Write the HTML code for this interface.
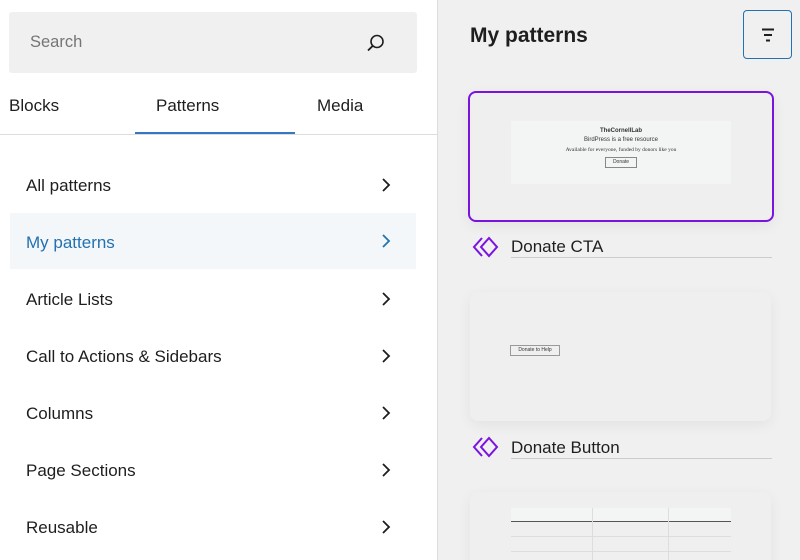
<!DOCTYPE html>
<html><head><style>
*{margin:0;padding:0;box-sizing:border-box}
html,body{width:800px;height:560px;overflow:hidden}
body{background:#f0f0f0;font-family:"Liberation Sans",sans-serif;position:relative;color:#1e1e1e}
.left{position:absolute;left:0;top:0;width:438px;height:560px;background:#fff;border-right:1px solid #ddd}
.search{position:absolute;left:9px;top:12px;width:408px;height:61px;background:#f0f0f0;border-radius:3px}
.search span{position:absolute;left:21px;top:21px;font-size:16.5px;color:#757575}
.tab{position:absolute;top:96px;font-size:17px}
.sep{position:absolute;left:0;top:134px;width:437px;height:1px;background:#ddd}
.ul{position:absolute;left:135px;top:132px;width:160px;height:2px;background:#3477c4}
.item{position:absolute;left:10px;width:406px;height:56px;font-size:17px}
.item span{position:absolute;left:16px;top:19px}
.item svg{position:absolute;left:369px;top:20px}
.sel{background:#f4f7f9;color:#2271b1}
.h{position:absolute;left:470px;top:24px;font-size:21px;font-weight:bold}
.fb{position:absolute;left:743px;top:10px;width:49px;height:49px;border:1.5px solid #2271b1;border-radius:4px;background:#f0f0f0}
.card{position:absolute;left:470px;width:301px;background:#efefef;border-radius:8px;box-shadow:0 4px 14px rgba(0,0,0,.06)}
.lab{position:absolute;left:511px;font-size:17px}
.line{position:absolute;left:511px;width:261px;height:1px;background:#ccc}
</style></head><body>
<div class="left">
<div class="search"><span>Search</span>
<svg style="position:absolute;left:356px;top:20px" width="22" height="22" viewBox="0 0 22 22"><circle cx="12" cy="9.5" r="6" fill="none" stroke="#1e1e1e" stroke-width="1.6"/><path d="M7.8 13.8 3 18.5" stroke="#1e1e1e" stroke-width="1.8"/></svg></div>
<div class="tab" style="left:9px">Blocks</div>
<div class="tab" style="left:156px">Patterns</div>
<div class="tab" style="left:317px">Media</div>
<div class="sep"></div><div class="ul"></div>
<div class="item" style="top:157px"><span>All patterns</span><svg width="14" height="16"><path d="M4 2l6 6-6 6" fill="none" stroke="#1e1e1e" stroke-width="1.8"/></svg></div>
<div class="item sel" style="top:213px"><span style="top:20px">My patterns</span><svg width="14" height="16"><path d="M4 2l6 6-6 6" fill="none" stroke="#2271b1" stroke-width="1.8"/></svg></div>
<div class="item" style="top:271px"><span>Article Lists</span><svg width="14" height="16"><path d="M4 2l6 6-6 6" fill="none" stroke="#1e1e1e" stroke-width="1.8"/></svg></div>
<div class="item" style="top:328px"><span>Call to Actions &amp; Sidebars</span><svg width="14" height="16"><path d="M4 2l6 6-6 6" fill="none" stroke="#1e1e1e" stroke-width="1.8"/></svg></div>
<div class="item" style="top:385px"><span>Columns</span><svg width="14" height="16"><path d="M4 2l6 6-6 6" fill="none" stroke="#1e1e1e" stroke-width="1.8"/></svg></div>
<div class="item" style="top:442px"><span>Page Sections</span><svg width="14" height="16"><path d="M4 2l6 6-6 6" fill="none" stroke="#1e1e1e" stroke-width="1.8"/></svg></div>
<div class="item" style="top:499px"><span>Reusable</span><svg width="14" height="16"><path d="M4 2l6 6-6 6" fill="none" stroke="#1e1e1e" stroke-width="1.8"/></svg></div>
</div>
<div class="h">My patterns</div>
<div class="fb"><svg style="position:absolute;left:13px;top:13px" width="22" height="22"><path d="M5 5.5h12M7 11h8M9 16.5h4" stroke="#1e1e1e" stroke-width="2"/></svg></div>

<div class="card" style="left:468px;top:91px;width:306px;height:131px;border:2.5px solid #7a12e0"></div>
<div style="position:absolute;left:511px;top:121px;width:220px;height:63px;background:#f3f5f4;text-align:center;font-size:6px;color:#333">
<div style="margin-top:7px;font-size:6px"><b>TheCornellLab</b></div>
<div style="margin-top:3px">BirdPress is a free resource</div>
<div style="margin-top:4px;font-family:'Liberation Serif',serif;font-size:5.5px">Available for everyone, funded by donors like you</div>
<div style="margin:4px auto 0;width:32px;height:11px;border:1px solid #888;font-size:5px;line-height:9px">Donate</div></div>
<svg style="position:absolute;left:472px;top:236px" width="28" height="22" viewBox="0 0 28 22"><path d="M10 2 2 11l8 9M17 2l8 9-8 9-8-9z" fill="none" stroke="#7a12e0" stroke-width="2"/></svg>
<div class="lab" style="top:237px">Donate CTA</div><div class="line" style="top:257px"></div>

<div class="card" style="top:292px;height:129px"></div>
<div style="position:absolute;left:510px;top:345px;width:50px;height:11px;border:1px solid #999;font-size:5px;line-height:9px;text-align:center;color:#333">Donate to Help</div>
<svg style="position:absolute;left:472px;top:436px" width="28" height="22" viewBox="0 0 28 22"><path d="M10 2 2 11l8 9M17 2l8 9-8 9-8-9z" fill="none" stroke="#7a12e0" stroke-width="2"/></svg>
<div class="lab" style="top:438px">Donate Button</div><div class="line" style="top:458px"></div>

<div class="card" style="top:492px;height:90px"></div>
<div style="position:absolute;left:511px;top:508px;width:220px;height:52px;overflow:hidden;font-size:4px">
<div style="height:14px;background:#f3f5f4;border-bottom:1px solid #555"></div>
<div style="height:15px;border-bottom:1px solid #ddd"></div>
<div style="height:15px;border-bottom:1px solid #ddd"></div>
<div style="position:absolute;left:81px;top:0;width:1px;height:60px;background:#ddd"></div>
<div style="position:absolute;left:157px;top:0;width:1px;height:60px;background:#ddd"></div>
</div>
</body></html>
